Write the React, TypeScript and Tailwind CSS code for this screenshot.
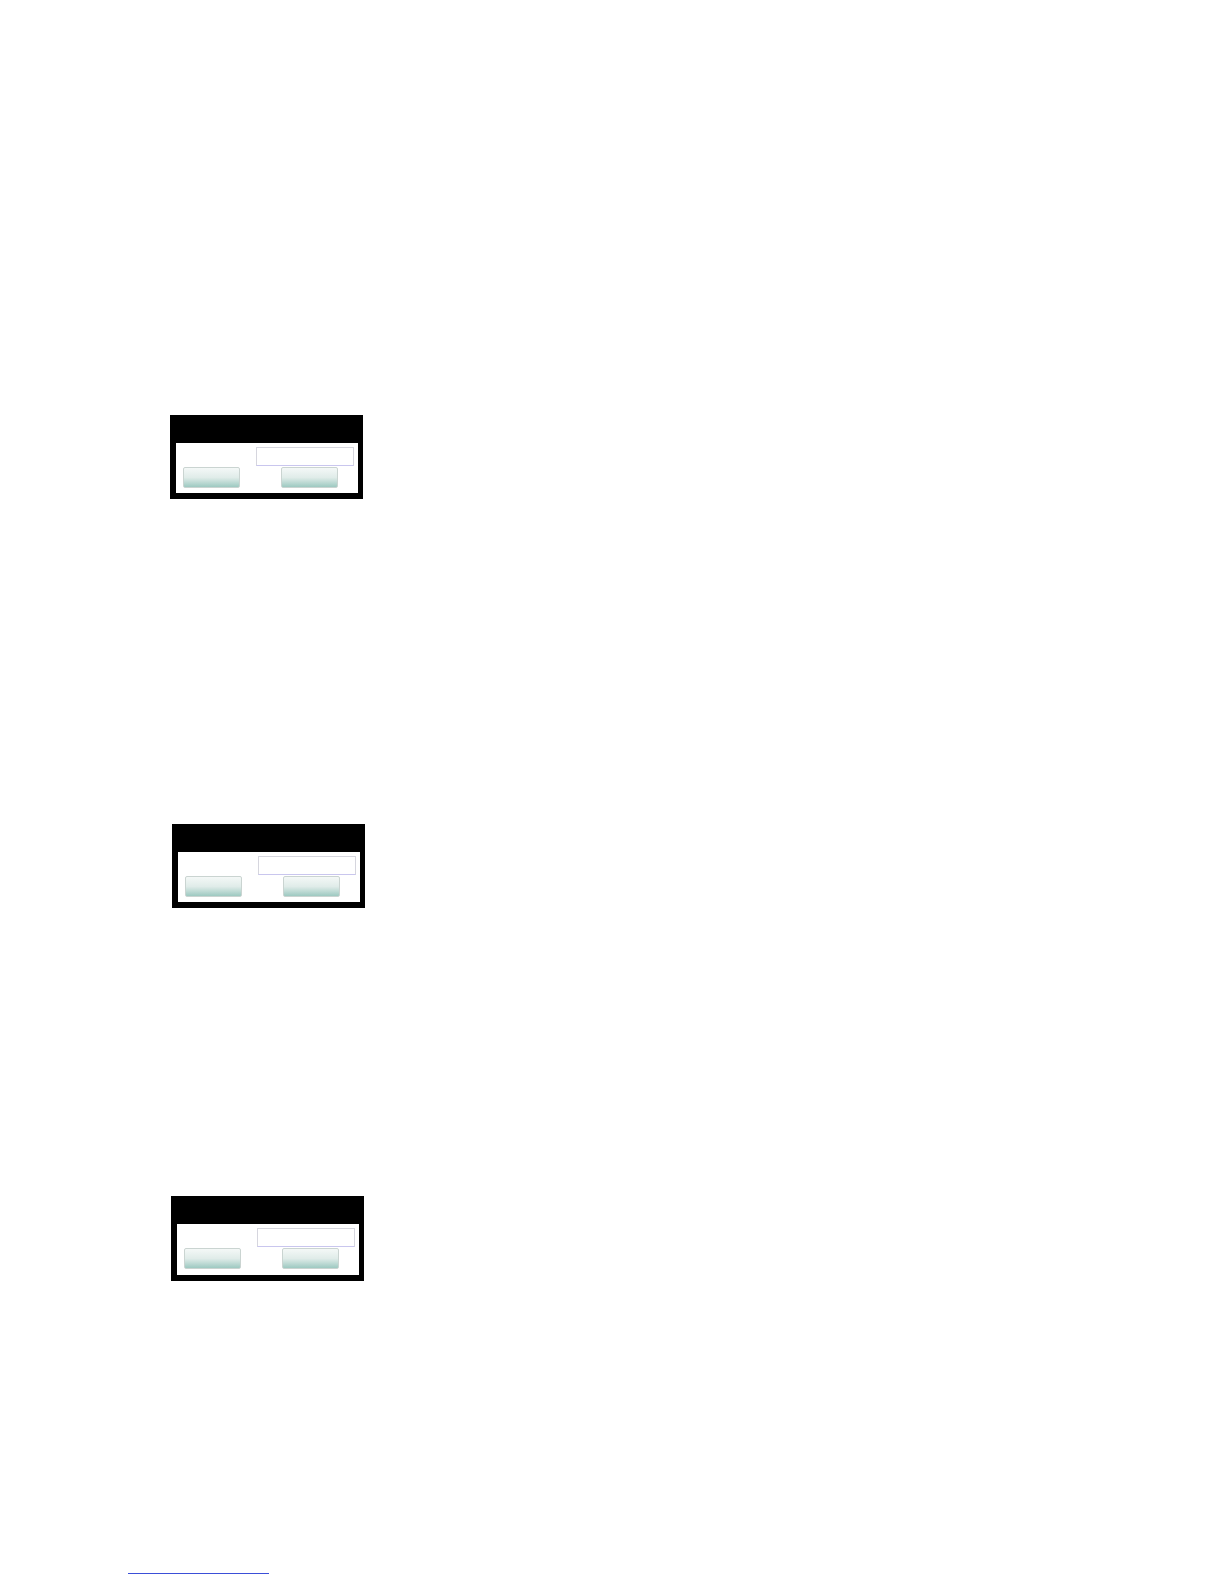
import React from "react";

type PanelProps = {
  className?: string;
  header?: string;
  body?: string;
};

// one dialog box: black frame, white body, a text box and two buttons
const Panel: React.FC<PanelProps> = ({
  className = "",
  header = "h-[28px]",
  body = "pb-[5px]",
}) => {
  return (
    <div className={`w-[193px] bg-black pl-[6px] pr-[5px] pb-[6px] ${className}`}>
      <div className={header}></div>
      <div className={`bg-white pt-[4px] flex flex-col ${body}`}>
        <input
          type="text"
          className="ml-[80px] w-[98px] h-[19px] border border-[#d6d6de] border-b-[#c9c6ee] bg-white outline-none"
        />
        <div className="flex mt-[1px] pl-[7px] gap-[41px]">
          <button className="w-[57px] h-[21px] rounded-[2px] border border-[#cad4d1] bg-gradient-to-b from-[#f4f8f7] via-[#e0ece9] to-[#9dc9c1]"></button>
          <button className="w-[57px] h-[21px] rounded-[2px] border border-[#cad4d1] bg-gradient-to-b from-[#f4f8f7] via-[#e0ece9] to-[#9dc9c1]"></button>
        </div>
      </div>
    </div>
  );
};

export default function App() {
  return (
    <div
      className="w-[1224px] h-[1584px] bg-white overflow-hidden pt-[415px]"
      style={{ fontFamily: '"Liberation Sans", Arial, sans-serif' }}
    >
      <Panel className="ml-[170px]" />
      <Panel className="ml-[172px] mt-[325px]" />
      <Panel className="ml-[171px] mt-[288px]" header="h-[28px]" body="pb-[6px]" />
      <div className="ml-[128px] mt-[292px] w-[141px] h-px bg-[#3b4fd8]"></div>
    </div>
  );
}
